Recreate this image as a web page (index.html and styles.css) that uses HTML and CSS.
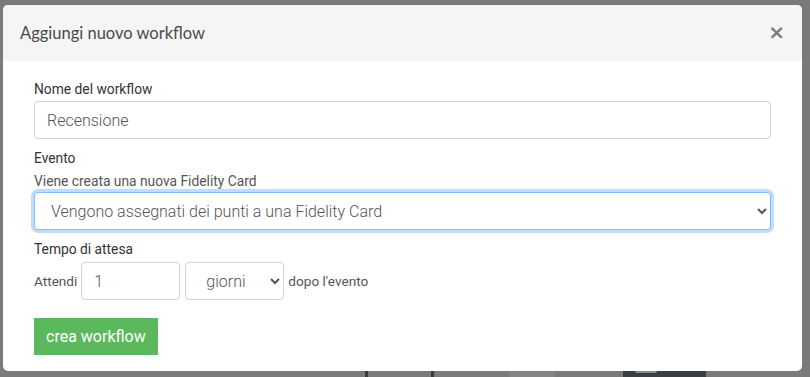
FILE: index.html
```html
<!DOCTYPE html>
<html lang="it">
<head>
<meta charset="utf-8">
<title>Aggiungi nuovo workflow</title>
<link rel="stylesheet" href="styles.css">
</head>
<body>
<div class="page">
  <div class="modal">
    <div class="modal-header">
      <h4 class="modal-title">Aggiungi nuovo workflow</h4>
      <span class="close">&times;</span>
    </div>
    <div class="modal-body">
      <div class="group">
        <label class="label">Nome del workflow</label>
        <input class="control" type="text" value="Recensione">
      </div>
      <div class="group group-gap">
        <label class="label">Evento</label>
        <div class="help">Viene creata una nuova Fidelity Card</div>
        <select class="control select focused">
          <option>Vengono assegnati dei punti a una Fidelity Card</option>
        </select>
      </div>
      <div class="group group-gap">
        <label class="label">Tempo di attesa</label>
        <div class="wait-row">
          <span class="inline-text">Attendi</span>
          <input class="control small" type="text" value="1">
          <select class="control select small small-select">
            <option>giorni</option>
          </select>
          <span class="inline-text">dopo l'evento</span>
        </div>
      </div>
      <button class="btn-success" type="button">crea workflow</button>
    </div>
  </div>
  <div class="under">
    <span class="seg s1"></span>
    <span class="seg s2"></span>
    <span class="seg s3"></span>
    <span class="seg s4"><span class="knob"></span></span>
  </div>
</div>
</body>
</html>
```
FILE: styles.css
```css
html, body {
  margin: 0;
  padding: 0;
}
body {
  background: #7a7a7a;
  width: 810px;
  height: 377px;
  overflow: hidden;
  font-family: Roboto, "Liberation Sans", sans-serif;
}
.page {
  padding: 5px 8px 0 3px;
}
.modal {
  width: 799px;
  height: 366px;
  background: #fff;
  border-radius: 5px;
  overflow: hidden;
  box-sizing: border-box;
}
.modal-header {
  height: 56px;
  background: #f5f5f5;
  display: flex;
  align-items: center;
  justify-content: space-between;
  padding: 0 17px 0 17px;
}
.modal-title {
  margin: 0;
  font-family: Lato, "Open Sans", sans-serif;
  font-weight: 400;
  font-size: 16.5px;
  color: #4a4a4a;
}
.close {
  font-family: "DejaVu Sans", sans-serif;
  font-size: 20px;
  font-weight: bold;
  color: #7a7a7a;
  line-height: 1;
  margin-top: -2px;
}
.modal-body {
  padding: 19px 31px 0 31px;
}
.group {
  display: flex;
  flex-direction: column;
}
.group-gap {
  margin-top: 10px;
}
.label {
  font-size: 13.8px;
  line-height: 18px;
  color: #333;
  margin-bottom: 3px;
}
.group-gap .label {
  margin-bottom: 0;
}
.help {
  font-size: 13.8px;
  font-weight: 400;
  line-height: 16px;
  color: #555;
  margin-top: 6px;
  margin-bottom: 3px;
}
.control {
  box-sizing: border-box;
  height: 38px;
  width: 100%;
  border: 1px solid #ced4da;
  border-radius: 4px;
  background: #fff;
  font-family: Roboto, "Liberation Sans", sans-serif;
  font-size: 16px;
  font-weight: 300;
  color: #555;
  padding: 0 12px;
  margin: 0;
}
.select {
  padding: 0 8px 0 12px;
}
.focused {
  border-color: #80bdff;
  box-shadow: 0 0 0 3px rgba(0, 123, 255, 0.25);
}
.wait-row {
  display: flex;
  align-items: center;
  margin-top: 4px;
}
.inline-text {
  font-size: 13.6px;
  font-weight: 400;
  color: #555;
}
.small {
  width: 99px;
  margin-left: 4px;
}
.small-select {
  margin-left: 5px;
  margin-right: 4px;
  padding-left: 16px;
}
.btn-success {
  display: block;
  margin-top: 18px;
  height: 37px;
  padding: 0 12px;
  border: none;
  border-radius: 0;
  background: #5cb85c;
  color: #fff;
  font-family: Roboto, "Liberation Sans", sans-serif;
  font-size: 16px;
  font-weight: 400;
}
.under {
  position: relative;
  height: 6px;
}
.seg {
  position: absolute;
  top: 0;
  height: 6px;
}
.s1 { left: 362px; width: 3px; background: #3a3a3a; }
.s2 { left: 428px; width: 3px; background: #3a3a3a; }
.s3 { left: 506px; width: 46px; background: #858585; }
.s4 { left: 620px; width: 83px; background: #3b3e42; }
.knob {
  position: absolute;
  left: 12px;
  top: 0;
  width: 22px;
  height: 2px;
  background: #8a8a8a;
  border-radius: 0 0 3px 3px;
}
```
